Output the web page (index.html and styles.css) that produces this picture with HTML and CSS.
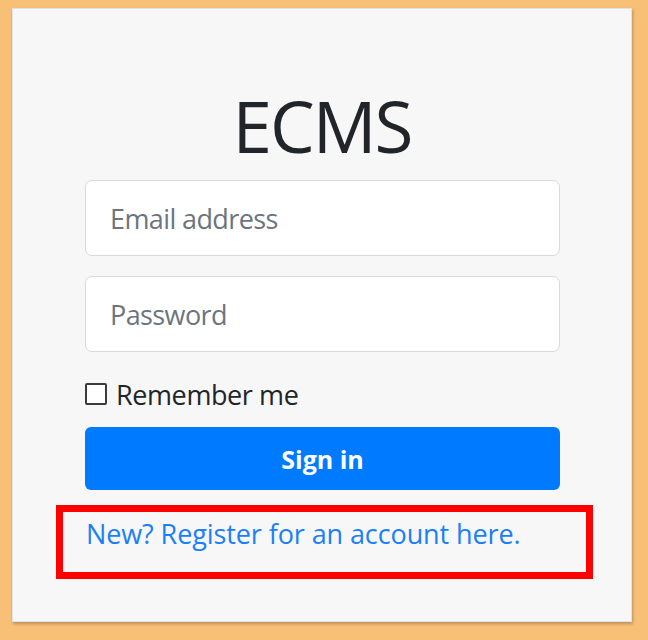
FILE: index.html
```html
<!DOCTYPE html>
<html lang="en">
<head>
<meta charset="utf-8">
<title>ECMS</title>
<link rel="stylesheet" href="styles.css">
</head>
<body>
<div class="card">
  <h1 class="title">ECMS</h1>
  <form class="form">
    <input class="field" type="email" placeholder="Email address">
    <input class="field field-gap" type="password" placeholder="Password">
    <label class="remember"><input class="check" type="checkbox"><span>Remember me</span></label>
    <button class="btn" type="button">Sign in</button>
  </form>
  <div class="highlight">
    <a class="register" href="#">New? Register for an account here.</a>
  </div>
</div>
</body>
</html>
```
FILE: styles.css
```css
html, body {
  margin: 0;
  padding: 0;
}
body {
  background: #f8c077;
  width: 648px;
  height: 640px;
  padding: 8px 16px 0 12px;
  box-sizing: border-box;
  font-family: "Open Sans", "Noto Sans", sans-serif;
  color: #212529;
}
.card {
  width: 620px;
  height: 614px;
  box-sizing: border-box;
  background: #f7f7f7;
  border: 1px solid #dfe3e8;
  box-shadow: 1px 2px 3px rgba(0,0,0,0.25);
  padding-top: 74px;
}
.title {
  margin: 0;
  text-align: center;
  font-weight: 400;
  font-size: 71px;
  line-height: 86px;
  letter-spacing: -2px;
}
.form {
  width: 475px;
  margin: 11px 0 0 72px;
  display: flex;
  flex-direction: column;
}
.field {
  height: 76px;
  box-sizing: border-box;
  border: 1px solid #d6dae0;
  border-radius: 7px;
  background: #fff;
  padding: 0 24px;
  font-family: inherit;
  font-size: 27px;
  letter-spacing: -0.6px;
  color: #495057;
  outline: none;
}
.field::placeholder {
  color: #6c757d;
}
.field-gap {
  margin-top: 20px;
}
.remember {
  display: flex;
  align-items: center;
  margin-top: 22px;
  height: 40px;
  font-size: 27px;
  letter-spacing: -0.4px;
}
.check {
  appearance: none;
  -webkit-appearance: none;
  margin: 0 9px 0 0;
  width: 22px;
  height: 22px;
  box-sizing: border-box;
  border: 2px solid #3b3b3b;
  border-radius: 2px;
  background: #fff;
}
.btn {
  margin-top: 13px;
  height: 63px;
  border: none;
  border-radius: 6px;
  background: #007bff;
  color: #fff;
  font-family: inherit;
  font-weight: 700;
  font-size: 25px;
}
.highlight {
  margin: 15px 0 0 43px;
  width: 537px;
  height: 74px;
  box-sizing: border-box;
  border: 7px solid #ff0000;
  padding: 4px 0 0 23px;
}
.register {
  color: #1a80f5;
  text-decoration: none;
  font-size: 27px;
  line-height: 36px;
  letter-spacing: -0.1px;
}
```
